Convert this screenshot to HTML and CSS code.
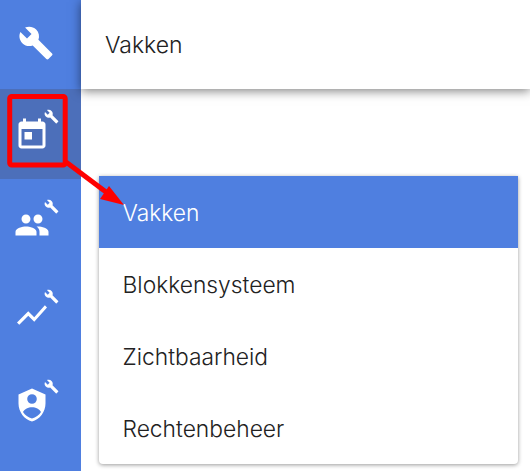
FILE: index.html
```html
<!DOCTYPE html>
<html lang="en">
<head>
    <meta charset="UTF-8">
    <title>Vakken</title>
    <link rel="stylesheet" href="styles.css">
</head>
<body>
    <nav class="sidebar">
        <div class="nav-item nav-main">
            <svg class="icon" viewBox="0 0 24 24"><path d="M22.7 19l-9.1-9.1c.9-2.3.4-5-1.5-6.9-2-2-5-2.4-7.4-1.3L9 6 6 9 1.6 4.7C.4 7.1.9 10.1 2.9 12.1c1.9 1.9 4.6 2.4 6.9 1.5l9.1 9.1c.4.4 1 .4 1.4 0l2.3-2.3c.5-.4.5-1.1.1-1.4z"/></svg>
        </div>
        <div class="nav-item active">
            <svg class="icon" viewBox="0 0 24 24"><path d="M19 3h-1V1h-2v2H8V1H6v2H5c-1.11 0-1.99.9-1.99 2L3 19c0 1.1.89 2 2 2h14c1.1 0 2-.9 2-2V5c0-1.1-.9-2-2-2zm0 16H5V8h14v11zM7 10h5v5H7z"/></svg>
            <svg class="badge" viewBox="0 0 24 24"><path d="M22.7 19l-9.1-9.1c.9-2.3.4-5-1.5-6.9-2-2-5-2.4-7.4-1.3L9 6 6 9 1.6 4.7C.4 7.1.9 10.1 2.9 12.1c1.9 1.9 4.6 2.4 6.9 1.5l9.1 9.1c.4.4 1 .4 1.4 0l2.3-2.3c.5-.4.5-1.1.1-1.4z"/></svg>
        </div>
        <div class="nav-item">
            <svg class="icon" viewBox="0 0 24 24"><path d="M16 11c1.66 0 2.99-1.34 2.99-3S17.66 5 16 5c-1.66 0-3 1.34-3 3s1.34 3 3 3zm-8 0c1.66 0 2.99-1.34 2.99-3S9.66 5 8 5C6.34 5 5 6.34 5 8s1.34 3 3 3zm0 2c-2.33 0-7 1.17-7 3.5V19h14v-2.5c0-2.33-4.67-3.5-7-3.5zm8 0c-.29 0-.62.02-.97.05 1.16.84 1.97 1.97 1.97 3.45V19h6v-2.5c0-2.33-4.67-3.5-7-3.5z"/></svg>
            <svg class="badge" viewBox="0 0 24 24"><path d="M22.7 19l-9.1-9.1c.9-2.3.4-5-1.5-6.9-2-2-5-2.4-7.4-1.3L9 6 6 9 1.6 4.7C.4 7.1.9 10.1 2.9 12.1c1.9 1.9 4.6 2.4 6.9 1.5l9.1 9.1c.4.4 1 .4 1.4 0l2.3-2.3c.5-.4.5-1.1.1-1.4z"/></svg>
        </div>
        <div class="nav-item">
            <svg class="icon" viewBox="0 0 24 24"><path d="M3.5 18.49l6-6.01 4 4L22 6.92l-1.41-1.41-7.09 7.97-4-4L2 16.99z"/></svg>
            <svg class="badge" viewBox="0 0 24 24"><path d="M22.7 19l-9.1-9.1c.9-2.3.4-5-1.5-6.9-2-2-5-2.4-7.4-1.3L9 6 6 9 1.6 4.7C.4 7.1.9 10.1 2.9 12.1c1.9 1.9 4.6 2.4 6.9 1.5l9.1 9.1c.4.4 1 .4 1.4 0l2.3-2.3c.5-.4.5-1.1.1-1.4z"/></svg>
        </div>
        <div class="nav-item">
            <svg class="icon" viewBox="0 0 24 24"><path fill-rule="evenodd" d="M12 1L3 5v6c0 5.55 3.84 10.74 9 12 5.16-1.26 9-6.45 9-12V5l-9-4zm0 3.800a3.200 3.200 0 1 1 0 6.400 3.200 3.200 0 0 1 0-6.400zm0 8.700c2.500 0 5 1.200 6 3.200-1.300 2.100-3.500 3.700-6 4.300-2.500-.6-4.700-2.200-6-4.300 1-2 3.500-3.200 6-3.200z"/></svg>
            <svg class="badge" viewBox="0 0 24 24"><path d="M22.7 19l-9.1-9.1c.9-2.3.4-5-1.5-6.9-2-2-5-2.4-7.4-1.3L9 6 6 9 1.6 4.7C.4 7.1.9 10.1 2.9 12.1c1.9 1.9 4.6 2.4 6.9 1.5l9.1 9.1c.4.4 1 .4 1.4 0l2.3-2.3c.5-.4.5-1.1.1-1.4z"/></svg>
        </div>
    </nav>

    <main class="main">
        <header class="topbar">Vakken</header>
        <ul class="menu">
            <li class="menu-item selected">Vakken</li>
            <li class="menu-item">Blokkensysteem</li>
            <li class="menu-item">Zichtbaarheid</li>
            <li class="menu-item">Rechtenbeheer</li>
        </ul>
    </main>

    <svg class="annotation" width="530" height="471" viewBox="0 0 530 471">
        <rect x="9.700" y="96.500" width="55.500" height="68.500" rx="2" fill="none" stroke="#fe0000" stroke-width="5"/>
        <line x1="66" y1="162" x2="106" y2="192" stroke="#fe0000" stroke-width="5"/>
        <polygon points="124,205 100,199 109,186" fill="#fe0000"/>
    </svg>
</body>
</html>
```

FILE: styles.css
```css
body{margin: 0; padding: 0; width: 530px; height: 471px; overflow: hidden; display: flex; background-color: white; font-family: "Inter", sans-serif; font-weight: 300; color: #222;}

.sidebar{width: 81px; height: 471px; flex-shrink: 0; background-color: #4f7fe0;}
.nav-item{position: relative; height: 90px; padding: 28px 0 0 14px; box-sizing: border-box;}
.nav-main{height: 89px; padding: 25px 0 0 18px;}
.nav-item.active{background-color: #4c6fba;}

.icon{display: block; width: 36px; height: 36px; fill: white;}
.badge{position: absolute; top: 20px; left: 44px; width: 15px; height: 15px; fill: white;}

.main{flex: 1; position: relative;}
.topbar{height: 89px; display: flex; align-items: center; padding-left: 24px; font-size: 23px; box-shadow: 0 2px 10px rgba(0, 0, 0, 0.5);}

.menu{list-style: none; margin: 87px 12px 0 18px; padding: 0; background-color: white; border-radius: 0 0 4px 4px; box-shadow: 0 1px 4px rgba(0, 0, 0, 0.4);}
.menu-item{height: 72px; box-sizing: border-box; display: flex; align-items: center; padding: 1px 0 0 23.500px; font-size: 22.800px;}
.menu-item.selected{background-color: #4f7fe0; color: white;}

/* rode aanwijzing over de schermafbeelding */
.annotation{position: absolute; top: 0; left: 0;}
```
